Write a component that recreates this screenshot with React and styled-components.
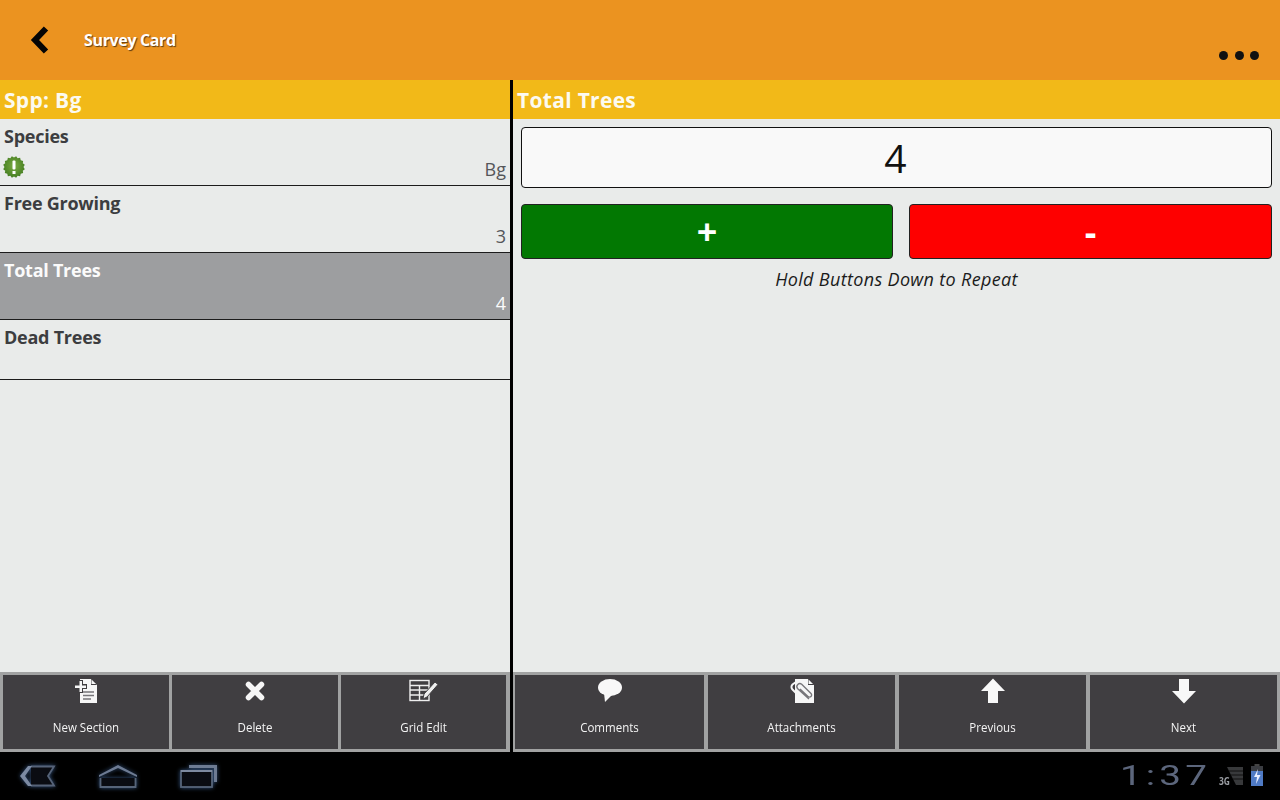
import React from 'react';
import styled, { createGlobalStyle } from 'styled-components';

const Global = createGlobalStyle`
  html, body { margin: 0; padding: 0; background: #000; }
  body { font-family: "Open Sans", "Noto Sans", sans-serif; }
  * { box-sizing: border-box; }
`;

const Screen = styled.div`
  width: 1280px; height: 800px; display: flex; flex-direction: column; overflow: hidden;
`;
const ActionBar = styled.header`
  height: 80px; flex: none; background: #eb9320; display: flex; align-items: center; position: relative;
`;
const BackButton = styled.div`
  width: 84px; padding-left: 29px; display: flex; align-items: center; height: 100%;
`;
const Title = styled.h1`
  margin: 0; font-size: 16px; font-weight: 700; color: #fff; letter-spacing: -.35px; text-shadow: 1px 1px 1px #5d3b10;
`;
const Overflow = styled.div`
  margin-left: auto; margin-right: 21px; margin-top: 30px; display: flex; gap: 6.500px;
`;
const Dot = styled.span`
  width: 9px; height: 9px; border-radius: 50%; background: #111;
`;
const Main = styled.main`
  flex: 1; display: flex; background: #000; min-height: 0;
`;
const Pane = styled.section`
  width: ${p => p.$w}px; flex: none; display: flex; flex-direction: column; background: #e9ebea;
  margin-left: ${p => p.$gap || 0}px;
`;
const SectionHead = styled.div`
  height: 39px; flex: none; background: #f2b918; color: #fcfaf0; font-size: 21px; font-weight: 700;
  line-height: 41px; padding-left: ${p => p.$pad}px; letter-spacing: .3px;
`;
const List = styled.div`
  flex: 1; min-height: 0;
`;
const Row = styled.div`
  height: ${p => p.$h}px; border-bottom: 1px solid #1c1c1c; padding: 5px 4px 0;
  background: ${p => (p.$active ? '#9d9ea0' : 'transparent')};
  color: ${p => (p.$active ? '#fbfbfb' : '#3c3d40')};
  position: relative;
`;
const RowLabel = styled.div`
  font-size: 18px; font-weight: 700; line-height: 24px; letter-spacing: -.25px;
`;
const RowValue = styled.div`
  position: absolute; right: 4px; bottom: 4px; font-size: 18px; line-height: 24px;
  color: ${p => (p.$active ? '#fbfbfb' : '#55565a')};
`;
const Badge = styled.div`
  position: absolute; left: 3px; bottom: 7px; width: 22px; height: 22px; display: flex;
`;
const Toolbar = styled.div`
  height: 80px; flex: none; background: #a1a2a2; display: grid;
  grid-template-columns: ${p => p.$cols}; column-gap: ${p => p.$gapx}px;
  padding: 3px ${p => p.$padr}px 3px ${p => p.$padl}px;
`;
const ToolButton = styled.div`
  background: #403e41; color: #f4f4f4; display: flex; flex-direction: column; align-items: center;
  padding-top: 2px; position: relative;
`;
const ToolIcon = styled.div`
  height: 28px; display: flex; align-items: center; justify-content: center;
`;
const ToolLabel = styled.div`
  position: absolute; left: 0; right: 0; bottom: 13px; text-align: center; font-size: 12px; line-height: 17px;
  transform: scaleX(.96);
`;
const Content = styled.div`
  flex: 1; min-height: 0; padding: 8px 8px 0;
`;
const ValueBox = styled.div`
  height: 61px; background: #f9f9f9; border: 1px solid #111; border-radius: 4px; display: flex;
  align-items: center; justify-content: center; font-size: 39px; color: #111; padding-right: 2px;
`;
const ButtonRow = styled.div`
  display: grid; grid-template-columns: 372px 363px; column-gap: 16px; margin-top: 16px;
`;
const StepButton = styled.div`
  height: 55px; border: 1px solid #222; border-radius: 4px; background: ${p => p.$bg};
  display: flex; align-items: center; justify-content: center;
  color: #fff; font-size: 36px; font-weight: 700; line-height: 1;
`;
const Hint = styled.div`
  margin-top: 8px; text-align: center; font-size: 18px; font-style: italic; color: #1b1b1b; line-height: 25px;
  letter-spacing: .34px;
`;
const SystemBar = styled.footer`
  height: 48px; flex: none; background: #000; display: flex; align-items: center; padding: 0 15px 0 17px;
`;
const NavIcons = styled.div`
  display: flex; gap: 41px; align-items: center; filter: drop-shadow(0 0 2px #35547f);
`;
const Status = styled.div`
  margin-left: auto; display: flex; align-items: center; position: relative; height: 100%;
`;
const Clock = styled.div`
  font-family: Roboto, sans-serif; font-size: 28px; font-weight: 400; color: #5c667c;
  letter-spacing: 3px; transform: scale(1.38, 1); transform-origin: right center; margin-right: 7px; line-height: 1;
`;
const Net = styled.div`
  font-size: 10px; font-weight: 700; color: #9a9da3; align-self: flex-end; margin-bottom: 12px; margin-right: -4px;
  transform: scaleX(.85); position: relative; z-index: 1;
`;

const Back = () => (
  <svg width="22" height="28" viewBox="0 0 22 28"><path d="M17 2.500 6 14l11 11.500" fill="none" stroke="#050505" strokeWidth="6" /></svg>
);
const Burst = () => {
  const pts = [];
  for (let i = 0; i < 32; i++) {
    const r = i % 2 ? 11 : 9.500;
    const a = (i / 32) * Math.PI * 2;
    pts.push(`${(11 + r * Math.cos(a)).toFixed(2)},${(11 + r * Math.sin(a)).toFixed(2)}`);
  }
  return (
    <svg width="22" height="22" viewBox="0 0 22 22">
      <defs><radialGradient id="g" cx=".5" cy=".45" r=".6"><stop offset="0" stopColor="#7cab42" /><stop offset="1" stopColor="#3f7a1e" /></radialGradient></defs>
      <polygon points={pts.join(' ')} fill="url(#g)" />
      <rect x="9.500" y="4.500" width="3" height="9" rx="1" fill="#fff" />
      <rect x="9.500" y="15" width="3" height="3" fill="#fff" />
    </svg>
  );
};
const NewDoc = () => (
  <svg width="24" height="26" viewBox="0 0 24 26">
    <path d="M6 1h11l6 6v18H6z" fill="#f6f6f6" />
    <path d="M17 0.500v6.500h6" fill="#403e41" />
    <path d="M17.500 1.500l4.500 4.500h-4.500z" fill="#f6f6f6" />
    <path d="M9 14h11M9 17.500h11M9 21h8" stroke="#77767a" strokeWidth="1.300" />
    <path d="M0 6h4V2h5v4h4v5H9v4H4v-4H0z" fill="#403e41" />
    <path d="M1 7.500h4.500V3H8v4.500h4V10H8v4H5.500v-4H1z" fill="#f6f6f6" />
  </svg>
);
const Cross = () => (
  <svg width="20" height="20" viewBox="0 0 20 20"><path d="M3.500 3.500l13 13M16.500 3.500l-13 13" stroke="#f6f6f6" strokeWidth="5.500" strokeLinecap="round" /></svg>
);
const GridEdit = () => (
  <svg width="30" height="24" viewBox="0 0 30 24">
    <g fill="none" stroke="#eee" strokeWidth="1.400">
      <rect x="1" y="1.500" width="19" height="20" />
      <path d="M1 6.500h19M1 11h19M1 16h19M10.500 6.500v15" />
    </g>
    <path d="M14 20l1-5L26 3l3 2.500L18 18z" fill="#eee" stroke="#403e41" strokeWidth="1" />
  </svg>
);
const Bubble = () => (
  <svg width="24" height="24" viewBox="0 0 24 24"><ellipse cx="12" cy="8.500" rx="12" ry="8.500" fill="#f8f8f8" /><path d="M6 14l1 9 7-7z" fill="#f8f8f8" /></svg>
);
const Attach = () => (
  <svg width="26" height="26" viewBox="0 0 26 26">
    <path d="M6 1h13l6 6v18H6z" fill="#f6f6f6" />
    <path d="M19 0.500v6.500h6.500" fill="#403e41" />
    <path d="M19.500 1.500l4.500 4.500h-4.500z" fill="#f6f6f6" />
    <path d="M20 21 8.500 10.500a3 3 0 0 1 4.200-4.200L22 15.500a2 2 0 0 1-3 3L11 11" fill="none" stroke="#77767a" strokeWidth="1.400" />
    <path d="M7 4 3.500 6.500a3.500 3.500 0 0 0 0 5L9 17" fill="none" stroke="#f6f6f6" strokeWidth="2" />
  </svg>
);
const ArrowUp = () => (
  <svg width="24" height="26" viewBox="0 0 24 26"><path d="M12 0.500 24 13h-7v12H7V13H0z" fill="#f8f8f8" /></svg>
);
const ArrowDown = () => (
  <svg width="24" height="26" viewBox="0 0 24 26"><path d="M12 25.500 24 13h-7V1H7v12H0z" fill="#f8f8f8" /></svg>
);
const NavBack = () => (
  <svg width="40" height="26" viewBox="0 0 40 26">
    <path d="M14 3.500h23l-6 9.500 6 9.500H14" fill="#0a0c12" stroke="#566378" strokeWidth="1.800" />
    <path d="M11 3 3 13l8 10h4L8 13l7-10z" fill="#7c8aa2" />
  </svg>
);
const NavHome = () => (
  <svg width="40" height="26" viewBox="0 0 40 26">
    <path d="M1 12 20 2l19 10v2L20 5 1 14z" fill="#6d7b93" />
    <path d="M2.500 15v9h35v-9" fill="#0a0c12" stroke="#566479" strokeWidth="1.800" />
  </svg>
);
const NavRecent = () => (
  <svg width="40" height="26" viewBox="0 0 40 26">
    <path d="M10 2h28v17h-3V5H10z" fill="#6d7b93" />
    <rect x="2" y="8" width="31" height="16" fill="#0a0c12" stroke="#566479" strokeWidth="1.800" />
    <path d="M2 8h31" stroke="#7d8aa0" strokeWidth="2" />
  </svg>
);
const Signal = () => (
  <svg width="16" height="19" viewBox="0 0 16 19"><path d="M0 0h16v18H9z" fill="#38393b" /><path d="M2 4h14M4 8h12M6 12h10" stroke="#111" strokeWidth="1.200" /></svg>
);
const Battery = () => (
  <svg width="16" height="24" viewBox="0 0 16 24" style={{ marginLeft: 6 }}>
    <rect x="5.500" y="0" width="5" height="3" fill="#444" />
    <rect x="2" y="2" width="12" height="6" fill="#3b3d42" />
    <rect x="2" y="7" width="12" height="15" fill="#4f7ac4" />
    <path d="M9 5 5 13h3l-1 7 4.500-9H8z" fill="#e8eeff" />
  </svg>
);

const leftTools = [['New Section', <NewDoc />], ['Delete', <Cross />], ['Grid Edit', <GridEdit />]];
const rightTools = [['Comments', <Bubble />], ['Attachments', <Attach />], ['Previous', <ArrowUp />], ['Next', <ArrowDown />]];

export default function App() {
  return (
    <Screen>
      <Global />
      <ActionBar>
        <BackButton><Back /></BackButton>
        <Title>Survey Card</Title>
        <Overflow><Dot /><Dot /><Dot /></Overflow>
      </ActionBar>
      <Main>
        <Pane $w={510}>
          <SectionHead $pad={4}>Spp: Bg</SectionHead>
          <List>
            <Row $h={67}><RowLabel>Species</RowLabel><Badge><Burst /></Badge><RowValue>Bg</RowValue></Row>
            <Row $h={67}><RowLabel>Free Growing</RowLabel><RowValue>3</RowValue></Row>
            <Row $h={67} $active><RowLabel>Total Trees</RowLabel><RowValue $active>4</RowValue></Row>
            <Row $h={60}><RowLabel>Dead Trees</RowLabel></Row>
          </List>
          <Toolbar $cols="166px 166px 165px" $gapx={3} $padl={3} $padr={3}>
            {leftTools.map(([t, i]) => (
              <ToolButton key={t}><ToolIcon>{i}</ToolIcon><ToolLabel>{t}</ToolLabel></ToolButton>
            ))}
          </Toolbar>
        </Pane>
        <Pane $w={767} $gap={3}>
          <SectionHead $pad={4}>Total Trees</SectionHead>
          <Content>
            <ValueBox>4</ValueBox>
            <ButtonRow>
              <StepButton $bg="#027802">+</StepButton>
              <StepButton $bg="#fe0000">-</StepButton>
            </ButtonRow>
            <Hint>Hold Buttons Down to Repeat</Hint>
          </Content>
          <Toolbar $cols="189px 187px 187px 187px" $gapx={4} $padl={2} $padr={3}>
            {rightTools.map(([t, i]) => (
              <ToolButton key={t}><ToolIcon>{i}</ToolIcon><ToolLabel>{t}</ToolLabel></ToolButton>
            ))}
          </Toolbar>
        </Pane>
      </Main>
      <SystemBar>
        <NavIcons><NavBack /><NavHome /><NavRecent /></NavIcons>
        <Status>
          <Clock>1:37</Clock>
          <Net>3G</Net>
          <Signal />
          <Battery />
        </Status>
      </SystemBar>
    </Screen>
  );
}
